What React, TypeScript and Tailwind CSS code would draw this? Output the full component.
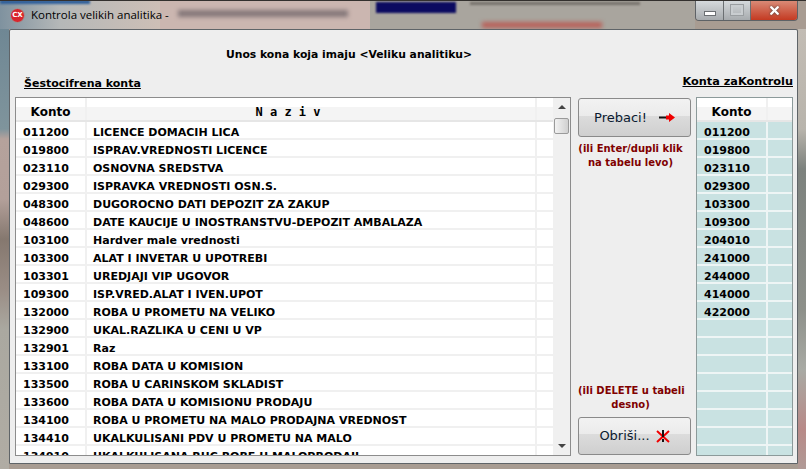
import { X } from "lucide-react";

const rows = [
  ["011200", "LICENCE DOMACIH LICA"],
  ["019800", "ISPRAV.VREDNOSTI LICENCE"],
  ["023110", "OSNOVNA SREDSTVA"],
  ["029300", "ISPRAVKA VREDNOSTI OSN.S."],
  ["048300", "DUGOROCNO DATI DEPOZIT ZA ZAKUP"],
  ["048600", "DATE KAUCIJE U INOSTRANSTVU-DEPOZIT AMBALAZA"],
  ["103100", "Hardver male vrednosti"],
  ["103300", "ALAT I INVETAR U UPOTREBI"],
  ["103301", "UREDJAJI VIP UGOVOR"],
  ["109300", "ISP.VRED.ALAT I IVEN.UPOT"],
  ["132000", "ROBA U PROMETU NA VELIKO"],
  ["132900", "UKAL.RAZLIKA U CENI U VP"],
  ["132901", "Raz"],
  ["133100", "ROBA DATA U KOMISION"],
  ["133500", "ROBA U CARINSKOM SKLADIST"],
  ["133600", "ROBA DATA U KOMISIONU PRODAJU"],
  ["134100", "ROBA U PROMETU NA MALO PRODAJNA VREDNOST"],
  ["134410", "UKALKULISANI PDV U PROMETU NA MALO"],
  ["134910", "UKALKULISANA RUC ROBE U MALOPRODAJI"],
];

const picked = ["011200", "019800", "023110", "029300", "103300", "109300", "204010", "241000", "244000", "414000", "422000", "", "", "", "", "", "", "", ""];

function PrebaciArrow() {
  return (
    <svg width="16" height="9" viewBox="0 0 16 9">
      <path d="M0 3.500h7v2H0z" fill="#111" />
      <path d="M7 2.500h3V0l6 4.500L10 9V6.500H7z" fill="#f00000" />
    </svg>
  );
}

function ObrisiX() {
  return (
    <svg width="14" height="13" viewBox="0 0 14 13">
      <path d="M1 1l12 11M13 1L1 12" stroke="#f00000" strokeWidth="2" fill="none" />
      <path d="M6 0h2v7H6zM6 9h2v3H6z" fill="#111" />
    </svg>
  );
}

export default function App() {
  return (
    <div className="relative w-[806px] h-[469px] overflow-hidden flex flex-col bg-[#a89c92] font-['DejaVu_Sans',sans-serif]">
      {/* blurred desktop showing through the glass frame */}
      <div className="absolute left-0 top-0 w-[160px] h-[29px] bg-[linear-gradient(90deg,#7f929f,#b5b8b8_60px,#cdbfb6)]"></div>
      <div className="absolute left-0 top-0 w-[90px] h-[4px] bg-[#2f5f9a] blur-[1px]"></div>
      <div className="absolute left-[160px] top-0 w-[210px] h-[29px] bg-[#cbb6b0]"></div>
      <div className="absolute left-[178px] top-[10px] w-[170px] h-[7px] bg-[#85787a] blur-[2px]"></div>
      <div className="absolute left-[370px] top-0 w-[325px] h-[29px] bg-[#a9a59e]"></div>
      <div className="absolute left-[376px] top-[2px] w-[80px] h-[11px] bg-[#0b0a60] blur-[1px]"></div>
      <div className="absolute left-[470px] top-[2px] w-[170px] h-[3px] bg-[#77726c] blur-[1px]"></div>
      <div className="absolute left-[482px] top-[22px] w-[120px] h-[6px] bg-[#b8615a] blur-[2px]"></div>
      <div className="absolute left-0 top-[29px] w-[9px] h-[440px] bg-[linear-gradient(180deg,#6f8794_0px,#7f949c_100px,#b5a29c_110px,#b3a09a_170px,#85786f_210px,#9a8d85_260px,#aaa8a0_300px,#b0aca4_440px)]"></div>
      <div className="absolute right-0 top-[29px] w-[8px] h-[440px] bg-[linear-gradient(180deg,#c2bcb4_0px,#b8b4ac_100px,#7d827e_140px,#8d908a_280px,#a8aaa4_340px,#b88a88_400px,#b09a96_440px)]"></div>

      {/* Title bar */}
      <div className="relative h-[29px] shrink-0 flex items-start border-t border-[#33302e]">
        <div className="flex items-center gap-[6px] pl-[10px] pt-[5px] flex-1">
          <div className="w-[15px] h-[15px] rounded-full bg-[#d8262e] border border-[#9a9a9a] flex items-center justify-center text-[7px] font-bold text-white leading-none">CX</div>
          <span className="text-[11.5px] leading-[18px] text-black font-['Open_Sans',sans-serif]">Kontrola velikih analitika -</span>
        </div>
        <div className="flex h-[20px] w-[103px] mr-[8px] rounded-b-[4px] border border-t-0 border-[#5e6266] overflow-hidden">
          <div className="w-[28px] flex items-center justify-center bg-[linear-gradient(180deg,#d5d9dc,#a7abae)] border-r border-[#6b6f72]">
            <div className="w-[12px] h-[5px] mt-[6px] bg-white border border-[#6b6f72]"></div>
          </div>
          <div className="w-[27px] flex items-center justify-center bg-[linear-gradient(180deg,#d5d9dc,#a7abae)] border-r border-[#6b6f72]">
            <div className="w-[12px] h-[10px] border-2 border-[#c9cdd0] outline outline-[#9a9ea1] outline-offset-0 mb-[2px]"></div>
          </div>
          <div className="flex-1 flex items-center justify-center bg-[linear-gradient(180deg,#d98a76,#c43a22)]">
            <X size={13} strokeWidth={4.500} className="text-white drop-shadow-[0_0_1px_#444]" />
          </div>
        </div>
      </div>

      {/* Client area */}
      <div className="relative ml-[9px] w-[789px] h-[435px] shrink-0 bg-[#eeeeee] border border-[#5f6468] rounded-t-[2px] flex flex-col px-[5px]">
        <div className="h-[67px] shrink-0 flex flex-col">
          <div className="pt-[17px] text-center text-[10.8px] leading-[16px] font-bold text-black pr-[109px]">Unos kona koja imaju &lt;Veliku analitiku&gt;</div>
          <div className="flex justify-between items-end mt-[11px] font-bold text-black">
            <span className="underline ml-[9px] text-[11px] leading-[15px]">Šestocifrena konta</span>
            <span className="underline -mr-[1px] mb-[2px] text-[11.3px] leading-[15px]">Konta zaKontrolu</span>
          </div>
        </div>

        <div className="flex items-start">
          {/* Left table */}
          <div className="w-[556px] h-[359px] shrink-0 border border-[#8c8c8c] bg-white flex overflow-hidden">
            <div className="flex-1 min-w-0 overflow-hidden">
              <div className="flex h-[24px] bg-[linear-gradient(180deg,#ffffff_40%,#f4f4f4_40%)] border-b-2 border-[#e6e6e6] text-[12px] font-bold">
                <div className="w-[71px] text-center leading-[28px] border-r-2 border-[#f0f0f0]">Konto</div>
                <div className="w-[450px] text-center leading-[28px] pr-[46px] whitespace-pre border-r-2 border-[#f0f0f0] font-['DejaVu_Sans_Mono',monospace]">N a z i v</div>
              </div>
              {rows.map(([code, name]) => (
                <div key={code} className="flex h-[18px] border-b-2 border-[#f0f0f0] text-[11px] font-bold text-black leading-[22px]">
                  <div className="w-[71px] pl-[7px] border-r-2 border-[#f0f0f0]">{code}</div>
                  <div className="w-[450px] pl-[6px] border-r-2 border-[#f0f0f0] whitespace-nowrap">{name}</div>
                </div>
              ))}
            </div>
            <div className="w-[17px] shrink-0 bg-[#f0f0f0] flex flex-col items-center">
              <div className="h-[18px] flex items-center"><div className="w-0 h-0 border-x-[4px] border-x-transparent border-b-[4px] border-b-[#444]"></div></div>
              <div className="w-[15px] h-[16px] bg-[linear-gradient(90deg,#f2f2f2,#d0d0d0)] border border-[#9a9a9a] rounded-[2px] mt-[2px]"></div>
              <div className="flex-1"></div>
              <div className="h-[18px] flex items-center"><div className="w-0 h-0 border-x-[4px] border-x-transparent border-t-[4px] border-t-[#444]"></div></div>
            </div>
          </div>

          {/* Buttons column */}
          <div className="w-[113px] h-[359px] shrink-0 ml-[7px] flex flex-col pt-[1px]">
            <button className="h-[39px] shrink-0 rounded-[3px] border border-[#8a8a8a] bg-[linear-gradient(180deg,#f2f2f2_0%,#ebebeb_45%,#dcdcdc_45%,#cfcfcf_100%)] flex items-center justify-center gap-[12px] text-[13px] text-[#0a1a30]">
              Prebaci! <PrebaciArrow />
            </button>
            <div className="mt-[5px] pr-[8px] text-center text-[10px] leading-[14px] font-bold text-[#800000] whitespace-nowrap">(ili Enter/dupli klik<br />na tabelu levo)</div>
            <div className="flex-1"></div>
            <div className="mb-[5px] pr-[8px] text-center text-[10px] leading-[14px] font-bold text-[#800000] whitespace-nowrap">(ili DELETE u tabeli<br />desno)</div>
            <button className="h-[38px] shrink-0 mb-[1px] rounded-[3px] border border-[#8a8a8a] bg-[linear-gradient(180deg,#f2f2f2_0%,#ebebeb_45%,#dcdcdc_45%,#cfcfcf_100%)] flex items-center justify-center gap-[6px] text-[13px] text-[#0a1a30]">
              Obriši... <ObrisiX />
            </button>
          </div>

          {/* Right table */}
          <div className="w-[97px] h-[359px] shrink-0 ml-[5px] border border-[#8c9a9a] bg-[#c9e2e2] overflow-hidden">
            <div className="flex h-[24px] bg-[linear-gradient(180deg,#ffffff_40%,#f4f4f4_40%)] border-b-2 border-[#e6e6e6] text-[12px] font-bold">
              <div className="w-[71px] text-center leading-[28px] border-r-2 border-[#f0f0f0]">Konto</div>
            </div>
            {picked.map((code, i) => (
              <div key={i} className="flex h-[18px] border-b-2 border-[#eef5f5] text-[11px] font-bold text-black leading-[22px]">
                <div className="w-[71px] pl-[7px] border-r-2 border-[#eef5f5]">{code}</div>
              </div>
            ))}
          </div>
        </div>
      </div>
    </div>
  );
}
